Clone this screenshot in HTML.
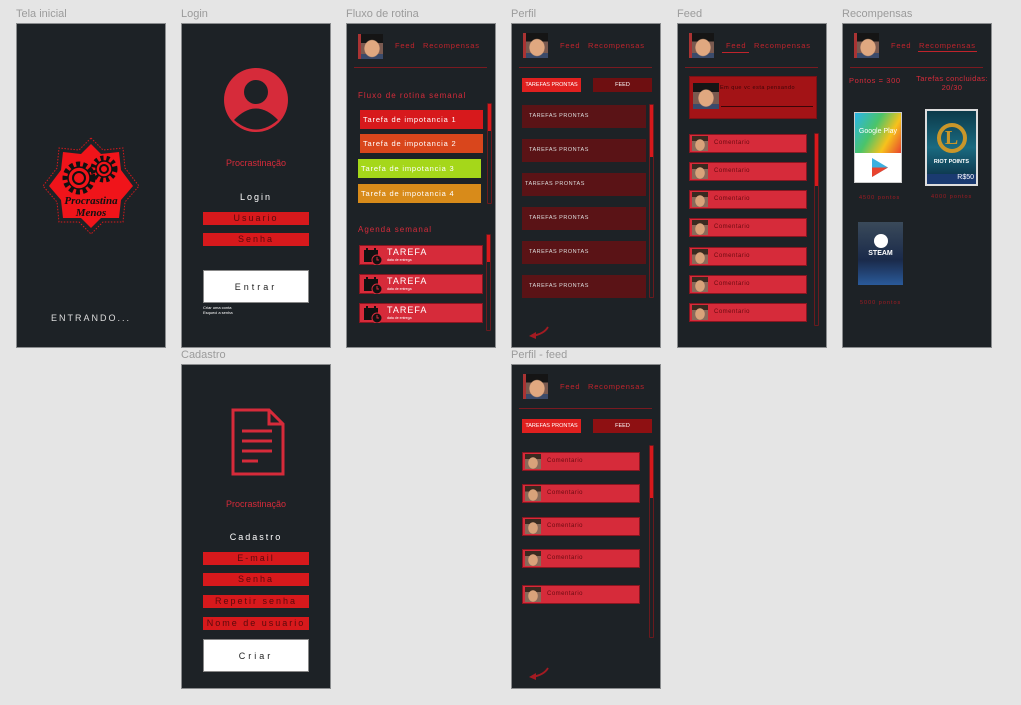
<!DOCTYPE html><html><head><meta charset="utf-8"><style>
*{margin:0;padding:0;box-sizing:border-box}
body{width:1021px;height:705px;background:#e5e5e5;position:relative;overflow:hidden;font-family:"Liberation Sans",sans-serif}
.lb{position:absolute;color:#9b9b9b;font-size:11px}
.f{position:absolute;width:150px;height:325px;background:#1d2226;border:1px solid #8a8c8e}
.a{position:absolute}
.t{position:absolute;font-size:8px;letter-spacing:1px;white-space:nowrap}
.red{color:#d62b3a}
.inp{position:absolute;left:21px;width:106px;height:13px;background:#d7191c;color:#5a0a0c;font-size:9px;letter-spacing:2px;text-align:center;line-height:13px}
.btn{position:absolute;left:21px;width:106px;height:33px;background:#fff;color:#222;font-size:9px;letter-spacing:3px;text-align:center;line-height:33px;border:1px solid #888}
.av{position:absolute;width:25px;height:25px;background:radial-gradient(ellipse 8px 9px at 50% 58%,#e0a880 90%,transparent 100%),linear-gradient(#151515 0 35%,#7a5a50 35% 80%,#3a4a6a 80%);border-left:3px solid #a33}
.hl{position:absolute;left:7px;width:133px;height:1px;background:#7a1a20}
.nav{position:absolute;top:17px;font-size:7.5px;color:#c0242c;letter-spacing:.8px}
.sb{position:absolute;width:5px;border:1px solid #6a1a1e;border-radius:1px}
.sb i{display:block;width:3px;background:#d7191c}
.pi{position:absolute;left:10px;width:124px;height:23px;background:#5a1316;color:#ddd;font-size:5.5px;letter-spacing:.5px;line-height:23px;padding-left:7px}
.cm{position:absolute;height:19px;background:#d62b3a;border:1px solid #8a1520;font-size:6px;color:#6a0a10;line-height:17px;padding-left:24px;letter-spacing:.5px}
.cm b{position:absolute;left:2px;top:1px;width:16px;height:15px;background:radial-gradient(ellipse 5px 6px at 50% 60%,#d9a27a 90%,transparent 100%),linear-gradient(#3a2a20 0 35%,#8a6a5a 35%)}
.tk{position:absolute;left:13px;width:123px;height:19px;color:#fff;font-size:7.5px;letter-spacing:.8px;line-height:19px;padding-left:3px}
.ag{position:absolute;left:12px;width:124px;height:20px;background:#d62b3a;border:1px solid #8a1520}
.ag svg{position:absolute;left:3px;top:1px}
.ag span{position:absolute;left:27px;top:1px;color:#fff;font-size:9px;letter-spacing:1px}
.ag em{position:absolute;left:27px;top:12px;color:#fff;font-size:3.5px;font-style:normal}
</style></head><body>
<div class="lb" style="left:16px;top:8px">Tela inicial</div>
<div class="lb" style="left:181px;top:8px">Login</div>
<div class="lb" style="left:346px;top:8px">Fluxo de rotina</div>
<div class="lb" style="left:511px;top:8px">Perfil</div>
<div class="lb" style="left:677px;top:8px">Feed</div>
<div class="lb" style="left:842px;top:8px">Recompensas</div>
<div class="lb" style="left:181px;top:349px">Cadastro</div>
<div class="lb" style="left:511px;top:349px">Perfil - feed</div>

<!-- Tela inicial -->
<div class="f" style="left:16px;top:23px">
<svg class="a" style="left:24px;top:112px" width="100" height="100" viewBox="0 0 100 100">
<polygon points="50,2 62,14 82,12 84,32 98,50 84,66 82,86 62,86 50,98 38,86 18,86 16,66 2,50 16,32 18,12 38,14" fill="none" stroke="#d7191c" stroke-dasharray="1.5 1.5"/>
<polygon points="50,8 60,18 78,16 80,34 92,50 80,64 78,82 60,82 50,92 40,82 22,82 20,64 8,50 20,34 22,16 40,18" fill="#f0141a"/>
<circle cx="38" cy="42" r="14" fill="none" stroke="#111" stroke-width="5" stroke-dasharray="4 3"/><circle cx="38" cy="42" r="11" fill="none" stroke="#111" stroke-width="1.5"/><circle cx="38" cy="42" r="6" fill="none" stroke="#111" stroke-width="2"/>
<circle cx="63" cy="33" r="11" fill="none" stroke="#111" stroke-width="5" stroke-dasharray="3 3"/><circle cx="63" cy="33" r="8" fill="none" stroke="#111" stroke-width="1.5"/><circle cx="63" cy="33" r="4" fill="none" stroke="#111" stroke-width="2"/>
<text x="50" y="68" font-size="11" text-anchor="middle" font-family="Liberation Serif" font-weight="bold" font-style="italic" fill="#111">Procrastina</text>
<text x="50" y="80" font-size="11" text-anchor="middle" font-family="Liberation Serif" font-weight="bold" font-style="italic" fill="#111">Menos</text>
</svg>
<div class="t" style="left:0;width:148px;text-align:center;top:289px;color:#ddd;font-size:9px;letter-spacing:2px">ENTRANDO...</div>
</div>

<!-- Login -->
<div class="f" style="left:181px;top:23px">
<svg class="a" style="left:42px;top:43px" width="64" height="66" viewBox="0 0 64 66"><circle cx="32" cy="33" r="32" fill="#d62b3a"/><circle cx="32" cy="25" r="12" fill="#1d2226"/><path d="M10,53 Q32,30 54,53 Q32,72 10,53Z" fill="#1d2226"/></svg>
<div class="t red" style="left:0;width:148px;text-align:center;top:134px;font-size:9px;letter-spacing:0">Procrastinação</div>
<div class="t" style="left:0;width:148px;text-align:center;top:168px;color:#fff;font-size:9px;letter-spacing:2px">Login</div>
<div class="inp" style="top:188px">Usuario</div>
<div class="inp" style="top:209px">Senha</div>
<div class="btn" style="top:246px">Entrar</div>
<div class="t" style="left:21px;top:281px;color:#fff;font-size:4px;letter-spacing:0">Criar uma conta<br>Esqueci a senha</div>
</div>

<!-- Fluxo -->
<div class="f" style="left:346px;top:23px">
<div class="av" style="left:11px;top:10px"></div>
<div class="nav" style="left:48px">Feed</div><div class="nav" style="left:76px">Recompensas</div>
<div class="hl" style="top:43px"></div>
<div class="t red" style="left:11px;top:67px;font-size:8px">Fluxo de rotina semanal</div>
<div class="tk" style="top:86px;background:#d7191c">Tarefa de impotancia 1</div>
<div class="tk" style="top:110px;background:#d9461c">Tarefa de impotancia 2</div>
<div class="tk" style="top:135px;background:#a5d71a;left:11px">Tarefa de impotancia 3</div>
<div class="tk" style="top:160px;background:#d88b1a;left:11px">Tarefa de impotancia 4</div>
<div class="sb" style="left:140px;top:79px;height:101px"><i style="height:27px"></i></div>
<div class="t red" style="left:11px;top:201px;font-size:8px">Agenda semanal</div>
<div class="ag" style="top:221px"><svg width="20" height="18"><rect x="1" y="3" width="14" height="12" fill="#111"/><rect x="3" y="1" width="2" height="4" fill="#111"/><rect x="11" y="1" width="2" height="4" fill="#111"/><circle cx="14" cy="13" r="5" fill="#111" stroke="#d62b3a" stroke-width="1"/><path d="M14,10 V13 H16" stroke="#d62b3a" stroke-width="1" fill="none"/></svg><span>TAREFA</span><em>data de entrega</em></div>
<div class="ag" style="top:250px"><svg width="20" height="18"><rect x="1" y="3" width="14" height="12" fill="#111"/><rect x="3" y="1" width="2" height="4" fill="#111"/><rect x="11" y="1" width="2" height="4" fill="#111"/><circle cx="14" cy="13" r="5" fill="#111" stroke="#d62b3a" stroke-width="1"/><path d="M14,10 V13 H16" stroke="#d62b3a" stroke-width="1" fill="none"/></svg><span>TAREFA</span><em>data de entrega</em></div>
<div class="ag" style="top:279px"><svg width="20" height="18"><rect x="1" y="3" width="14" height="12" fill="#111"/><rect x="3" y="1" width="2" height="4" fill="#111"/><rect x="11" y="1" width="2" height="4" fill="#111"/><circle cx="14" cy="13" r="5" fill="#111" stroke="#d62b3a" stroke-width="1"/><path d="M14,10 V13 H16" stroke="#d62b3a" stroke-width="1" fill="none"/></svg><span>TAREFA</span><em>data de entrega</em></div>
<div class="sb" style="left:139px;top:210px;height:97px"><i style="height:27px"></i></div>
</div>

<!-- Perfil -->
<div class="f" style="left:511px;top:23px">
<div class="av" style="left:11px;top:9px"></div>
<div class="nav" style="left:48px">Feed</div><div class="nav" style="left:76px">Recompensas</div>
<div class="hl" style="top:43px"></div>
<div class="a" style="left:10px;top:54px;width:59px;height:14px;background:#e0201f;color:#fff;font-size:5.5px;text-align:center;line-height:14px">TAREFAS PRONTAS</div>
<div class="a" style="left:81px;top:54px;width:59px;height:14px;background:#6e0f11;color:#fff;font-size:5.5px;text-align:center;line-height:14px">FEED</div>
<div class="pi" style="top:81px">TAREFAS PRONTAS</div>
<div class="pi" style="top:115px">TAREFAS PRONTAS</div>
<div class="pi" style="top:149px;padding-left:3px">TAREFAS PRONTAS</div>
<div class="pi" style="top:183px">TAREFAS PRONTAS</div>
<div class="pi" style="top:217px">TAREFAS PRONTAS</div>
<div class="pi" style="top:251px">TAREFAS PRONTAS</div>
<div class="sb" style="left:137px;top:80px;height:194px"><i style="height:52px"></i></div>
<svg class="a" style="left:14px;top:302px" width="24" height="14"><path d="M22,1 Q18,8 6,10" stroke="#a31b22" stroke-width="1.8" fill="none"/><path d="M10,6 L3,10 L10,13 Z" fill="#a31b22"/></svg>
</div>

<!-- Feed -->
<div class="f" style="left:677px;top:23px">
<div class="av" style="left:11px;top:9px"></div>
<div class="nav" style="left:48px">Feed</div><div class="nav" style="left:76px">Recompensas</div>
<div class="a" style="left:44px;top:28px;width:27px;height:1px;background:#c0242c"></div>
<div class="hl" style="top:43px"></div>
<div class="a" style="left:11px;top:52px;width:128px;height:43px;background:#a31316;border:1px solid #7a1015">
<div class="av" style="left:3px;top:6px;width:26px;height:26px;border:none"></div>
<div class="t" style="left:30px;top:8px;font-size:5.5px;color:#3a0508;letter-spacing:.5px">Em que vc esta pensando</div>
<div class="a" style="left:31px;top:29px;width:92px;height:1px;background:#3a0508"></div></div>
<div class="cm" style="left:11px;top:110px;width:118px"><b></b>Comentario</div>
<div class="cm" style="left:11px;top:138px;width:118px"><b></b>Comentario</div>
<div class="cm" style="left:11px;top:166px;width:118px"><b></b>Comentario</div>
<div class="cm" style="left:11px;top:194px;width:118px"><b></b>Comentario</div>
<div class="cm" style="left:11px;top:223px;width:118px"><b></b>Comentario</div>
<div class="cm" style="left:11px;top:251px;width:118px"><b></b>Comentario</div>
<div class="cm" style="left:11px;top:279px;width:118px"><b></b>Comentario</div>
<div class="sb" style="left:136px;top:109px;height:193px"><i style="height:52px"></i></div>
</div>

<!-- Recompensas -->
<div class="f" style="left:842px;top:23px">
<div class="av" style="left:11px;top:9px"></div>
<div class="nav" style="left:48px">Feed</div><div class="nav" style="left:76px">Recompensas</div>
<div class="a" style="left:75px;top:27px;width:59px;height:1px;background:#c0242c"></div>
<div class="hl" style="top:43px"></div>
<div class="t red" style="left:6px;top:52px;font-size:7.5px;letter-spacing:.6px">Pontos = 300</div>
<div class="t red" style="left:68px;top:50px;width:82px;font-size:7.5px;letter-spacing:.4px;text-align:center;line-height:9px">Tarefas concluidas:<br>20/30</div>
<div class="a" style="left:11px;top:88px;width:48px;height:71px;background:#fff;border:1px solid #ccc">
<div style="height:40px;background:linear-gradient(120deg,#2bb4e8,#4ac46a 40%,#f6c21c 70%,#e8432e);color:#fff;font-size:7px;text-align:center;padding-top:15px">Google Play</div>
<svg width="46" height="29"><polygon points="17,5 17,24 33,14.5" fill="#3bb0e0"/><polygon points="17,14.5 33,14.5 17,24" fill="#e8432e"/></svg></div>
<div class="a" style="left:82px;top:85px;width:53px;height:77px;background:linear-gradient(#0c3a4a,#1a6a80 50%,#0a2a40);border:2px solid #ddd">
<div style="margin:12px auto 0;width:30px;height:30px;border:4px solid #c9962a;border-radius:50%;color:#c9962a;font:bold 20px 'Liberation Serif';text-align:center;line-height:22px">L</div>
<div style="color:#fff;font-size:5.5px;text-align:center;margin-top:6px;font-weight:bold">RIOT POINTS</div>
<div style="position:absolute;bottom:0;left:0;right:0;height:10px;background:#1a3a70;color:#fff;font-size:7px;text-align:right;padding-right:2px">R$50</div></div>
<div class="t red" style="left:16px;top:171px;font-size:5.5px;color:#a31b22">4500 pontos</div>
<div class="t red" style="left:88px;top:170px;font-size:5.5px;color:#a31b22">4000 pontos</div>
<div class="a" style="left:15px;top:198px;width:45px;height:63px;background:linear-gradient(#3a4a5a,#1a2a4a 60%,#2a5a9a)">
<div style="margin:12px auto 0;width:14px;height:14px;border-radius:50%;background:#fff"></div>
<div style="color:#fff;font-size:7px;font-weight:bold;text-align:center;margin-top:2px">STEAM</div></div>
<div class="t red" style="left:17px;top:276px;font-size:5.5px;color:#a31b22">5000 pontos</div>
</div>

<!-- Cadastro -->
<div class="f" style="left:181px;top:364px">
<svg class="a" style="left:49px;top:43px" width="54" height="70" viewBox="0 0 54 70"><path d="M2,2 H38 L52,16 V66 H2 Z M38,2 V16 H52" fill="none" stroke="#d62b3a" stroke-width="3"/><path d="M11,23 H41 M11,33 H41 M11,43 H41 M11,53 H27" stroke="#d62b3a" stroke-width="3"/></svg>
<div class="t red" style="left:0;width:148px;text-align:center;top:134px;font-size:9px;letter-spacing:0">Procrastinação</div>
<div class="t" style="left:0;width:148px;text-align:center;top:167px;color:#fff;font-size:9px;letter-spacing:2px">Cadastro</div>
<div class="inp" style="top:187px">E-mail</div>
<div class="inp" style="top:208px">Senha</div>
<div class="inp" style="top:230px">Repetir senha</div>
<div class="inp" style="top:252px">Nome de usuario</div>
<div class="btn" style="top:274px">Criar</div>
</div>

<!-- Perfil - feed -->
<div class="f" style="left:511px;top:364px">
<div class="av" style="left:11px;top:9px"></div>
<div class="nav" style="left:48px">Feed</div><div class="nav" style="left:76px">Recompensas</div>
<div class="hl" style="top:43px"></div>
<div class="a" style="left:10px;top:54px;width:59px;height:14px;background:#e0201f;color:#fff;font-size:5.5px;text-align:center;line-height:14px">TAREFAS PRONTAS</div>
<div class="a" style="left:81px;top:54px;width:59px;height:14px;background:#8e1012;color:#fff;font-size:5.5px;text-align:center;line-height:14px">FEED</div>
<div class="cm" style="left:10px;top:87px;width:118px"><b></b>Comentario</div>
<div class="cm" style="left:10px;top:119px;width:118px"><b></b>Comentario</div>
<div class="cm" style="left:10px;top:152px;width:118px"><b></b>Comentario</div>
<div class="cm" style="left:10px;top:184px;width:118px"><b></b>Comentario</div>
<div class="cm" style="left:10px;top:220px;width:118px"><b></b>Comentario</div>
<div class="sb" style="left:137px;top:80px;height:193px"><i style="height:52px"></i></div>
<svg class="a" style="left:14px;top:302px" width="24" height="14"><path d="M22,1 Q18,8 6,10" stroke="#a31b22" stroke-width="1.8" fill="none"/><path d="M10,6 L3,10 L10,13 Z" fill="#a31b22"/></svg>
</div>
</body></html>
